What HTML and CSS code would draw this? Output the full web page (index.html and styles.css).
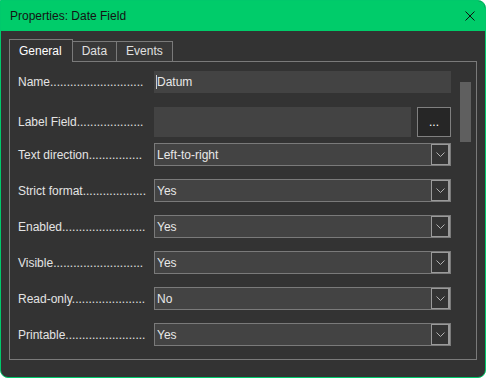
FILE: index.html
```html
<!DOCTYPE html>
<html>
<head>
<meta charset="utf-8">
<link rel="stylesheet" href="styles.css">
</head>
<body>
<div class="window">
	<div class="titlebar">
		<span class="title">Properties: Date Field</span>
		<svg class="close" width="10" height="10" viewBox="0 0 10 10"><path d="M0.5 0.5L9.5 9.5M9.5 0.5L0.5 9.5" stroke="#111" stroke-width="1"/></svg>
	</div>
	<div class="content">
		<div class="tabs">
			<div class="tab active">General</div>
			<div class="tab">Data</div>
			<div class="tab">Events</div>
		</div>
		<div class="pane">
			<div class="rows">
				<div class="row row-name">
					<div class="label">Name............................</div>
					<div class="input"><span class="caret"></span>Datum</div>
				</div>
				<div class="row row-field">
					<div class="label">Label Field....................</div>
					<div class="field-pick">
						<div class="input tall"></div>
						<div class="btn-more">...</div>
					</div>
				</div>
				<div class="row">
					<div class="label">Text direction................</div>
					<div class="select"><span class="value">Left-to-right</span><span class="drop"><svg width="9" height="5" viewBox="0 0 9 5"><path d="M0.5 0.5L4.5 4.5L8.5 0.5" fill="none" stroke="#b0b0b0" stroke-width="1"/></svg></span></div>
				</div>
				<div class="row">
					<div class="label">Strict format...................</div>
					<div class="select"><span class="value">Yes</span><span class="drop"><svg width="9" height="5" viewBox="0 0 9 5"><path d="M0.5 0.5L4.5 4.5L8.5 0.5" fill="none" stroke="#b0b0b0" stroke-width="1"/></svg></span></div>
				</div>
				<div class="row">
					<div class="label">Enabled.........................</div>
					<div class="select"><span class="value">Yes</span><span class="drop"><svg width="9" height="5" viewBox="0 0 9 5"><path d="M0.5 0.5L4.5 4.5L8.5 0.5" fill="none" stroke="#b0b0b0" stroke-width="1"/></svg></span></div>
				</div>
				<div class="row">
					<div class="label">Visible...........................</div>
					<div class="select"><span class="value">Yes</span><span class="drop"><svg width="9" height="5" viewBox="0 0 9 5"><path d="M0.5 0.5L4.5 4.5L8.5 0.5" fill="none" stroke="#b0b0b0" stroke-width="1"/></svg></span></div>
				</div>
				<div class="row">
					<div class="label">Read-only......................</div>
					<div class="select"><span class="value">No</span><span class="drop"><svg width="9" height="5" viewBox="0 0 9 5"><path d="M0.5 0.5L4.5 4.5L8.5 0.5" fill="none" stroke="#b0b0b0" stroke-width="1"/></svg></span></div>
				</div>
				<div class="row">
					<div class="label">Printable........................</div>
					<div class="select"><span class="value">Yes</span><span class="drop"><svg width="9" height="5" viewBox="0 0 9 5"><path d="M0.5 0.5L4.5 4.5L8.5 0.5" fill="none" stroke="#b0b0b0" stroke-width="1"/></svg></span></div>
				</div>
			</div>
			<div class="scrollbar"><div class="thumb"></div></div>
		</div>
	</div>
</div>
</body>
</html>
```
FILE: styles.css
```css
html, body {
	margin: 0;
	padding: 0;
	background: #ffffff;
}
body {
	font-family: "Liberation Sans", Arial, sans-serif;
	font-size: 12px;
	color: #e4e4e4;
}
.window {
	width: 486px;
	height: 378px;
	box-sizing: border-box;
	border: 1px solid #00c96b;
	border-radius: 0 8px 8px 8px;
	background: #333333;
	display: flex;
	flex-direction: column;
	overflow: hidden;
}
/* green caption */
.titlebar {
	height: 30px;
	background: #00cc6a;
	display: flex;
	align-items: center;
	justify-content: space-between;
	padding: 0 10px 0 9px;
	flex: none;
}
.title {
	color: #141414;
	font-size: 12px;
}
.close {
	display: block;
}
.content {
	flex: 1;
	padding: 8px 8px 18px 8px;
	display: flex;
	flex-direction: column;
}
.tabs {
	display: flex;
	align-items: flex-end;
	height: 22px;
	flex: none;
}
.tab {
	height: 19px;
	line-height: 19px;
	padding: 0 9px 0 9px;
	border: 1px solid #7a7a7a;
	border-bottom: none;
	background: #383838;
	margin-left: -1px;
	color: #e0e0e0;
}
.tab:first-child {
	margin-left: 0;
}
.tab.active {
	height: 22px;
	line-height: 22px;
	background: #333333;
	color: #ffffff;
	padding: 0 10px 0 9px;
	position: relative;
	z-index: 1;
	margin-bottom: -1px;
}
.pane {
	flex: 1;
	border: 1px solid #7a7a7a;
	display: flex;
	padding: 0 4px 0 8px;
}
.rows {
	flex: none;
	width: 433px;
	padding-top: 9px;
}
.row {
	display: flex;
	align-items: center;
	height: 23px;
	margin-bottom: 13px;
}
.row-name {
	height: 22px;
	margin-bottom: 14px;
}
.row-field {
	height: 30px;
	margin-bottom: 6px;
}
.label {
	width: 128px;
	margin-right: 8px;
	white-space: nowrap;
	color: #e4e4e4;
}
.input {
	flex: 1;
	height: 22px;
	background: #434343;
	display: flex;
	align-items: center;
	padding-left: 3px;
	color: #e8e8e8;
}
.input.tall {
	height: 30px;
}
.caret {
	width: 1px;
	height: 14px;
	background: #cfcfcf;
	margin-left: -1px;
}
.field-pick {
	flex: 1;
	display: flex;
	height: 30px;
}
.btn-more {
	width: 32px;
	height: 28px;
	margin-left: 6px;
	border: 1px solid #808080;
	background: #262626;
	color: #ffffff;
	text-align: center;
	line-height: 28px;
	font-size: 12px;
}
.select {
	flex: 1;
	height: 21px;
	border: 1px solid #7a7a7a;
	background: #434343;
	display: flex;
	align-items: center;
}
.value {
	flex: 1;
	padding-left: 2px;
	color: #e8e8e8;
}
.drop {
	width: 16px;
	height: 19px;
	border: 1px solid #9a9a9a;
	border-right-width: 2px;
	background: #333333;
	display: flex;
	align-items: center;
	justify-content: center;
}
.drop svg {
	display: block;
}
.scrollbar {
	margin-left: 9px;
	padding-top: 20px;
}
.thumb {
	width: 11px;
	height: 60px;
	background: #5f5f5f;
}
```
